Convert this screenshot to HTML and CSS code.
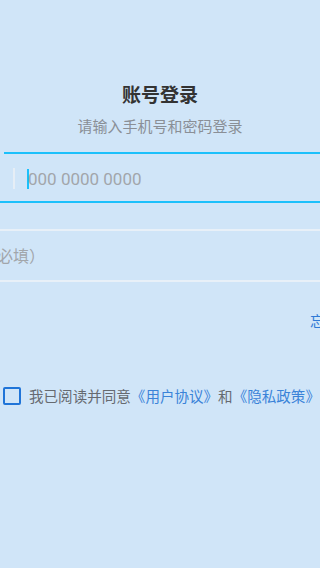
FILE: index.html
```html
<!DOCTYPE html>
<html lang="zh-CN">
<head>
<meta charset="utf-8">
<link rel="stylesheet" href="styles.css">
</head>
<body>
<div class="page">
  <div class="header">
    <h1 class="title">账号登录</h1>
    <p class="subtitle">请输入手机号和密码登录</p>
  </div>
  <div class="phone-top"></div>
  <div class="field phone">
    <span class="divider"></span>
    <span class="caret"></span>
    <span class="placeholder digits">000 0000 0000</span>
  </div>
  <div class="field pwd">
    <span class="placeholder pwd-text">请输入登录密码（必填）</span>
  </div>
  <div class="forgot-row"><span class="forgot">忘记密码</span></div>
  <div class="agree">
    <span class="checkbox"></span>
    <span class="agree-text">我已阅读并同意<span class="link">《用户协议》</span>和<span class="link">《隐私政策》</span></span>
  </div>
</div>
</body>
</html>
```

FILE: styles.css
```css
html, body {
  margin: 0;
  padding: 0;
  background: #d0e5f8;
}
.page {
  width: 320px;
  height: 568px;
  overflow: hidden;
  font-family: "Noto Sans CJK SC", "Noto Sans", sans-serif;
  background: #d0e5f8;
}
.header {
  padding-top: 81px;
  display: flex;
  flex-direction: column;
  align-items: center;
}
.title {
  margin: 0;
  font-size: 19px;
  line-height: 26px;
  font-weight: 700;
  color: #333333;
}
.subtitle {
  margin: 8px 0 0;
  font-size: 15px;
  line-height: 22px;
  color: #8a8f96;
}
.phone-top {
  margin-top: 15px;
  margin-left: 4px;
  height: 2px;
  background: #1cc0fb;
}
.field {
  display: flex;
  align-items: center;
  white-space: nowrap;
  overflow: hidden;
}
.phone {
  height: 49px;
  padding-top: 2px;
  box-sizing: border-box;
  border-bottom: 2px solid #1cc0fb;
}
.divider {
  width: 2px;
  height: 21px;
  margin-left: 13px;
  background: #e6eef6;
}
.caret {
  width: 2px;
  height: 20px;
  margin-left: 12px;
  background: #1cc0fb;
}
.placeholder {
  color: #a2a6ab;
  font-size: 16px;
}
.digits {
  font-family: Roboto, "Noto Sans", sans-serif;
  font-size: 17px;
  margin-left: -1px;
}
.pwd {
  margin-top: 26px;
  height: 49px;
  border-top: 2px solid #e8f0f8;
  border-bottom: 2px solid #e8f0f8;
}
.pwd-text {
  margin-left: -131px;
  margin-top: -2px;
}
.forgot-row {
  margin-top: 26px;
  height: 20px;
  padding-left: 310px;
  white-space: nowrap;
  overflow: hidden;
}
.forgot {
  font-size: 14.5px;
  line-height: 20px;
  color: #2f7ad6;
}
.agree {
  margin-top: 58px;
  display: flex;
  align-items: center;
  white-space: nowrap;
  padding-left: 3px;
}
.checkbox {
  box-sizing: border-box;
  width: 18px;
  height: 18px;
  border: 2px solid #1f74d8;
  border-radius: 2px;
  flex: none;
}
.agree-text {
  margin-left: 8px;
  font-size: 14.55px;
  line-height: 20px;
  color: #666a70;
}
.link {
  color: #3a83d8;
}
```
